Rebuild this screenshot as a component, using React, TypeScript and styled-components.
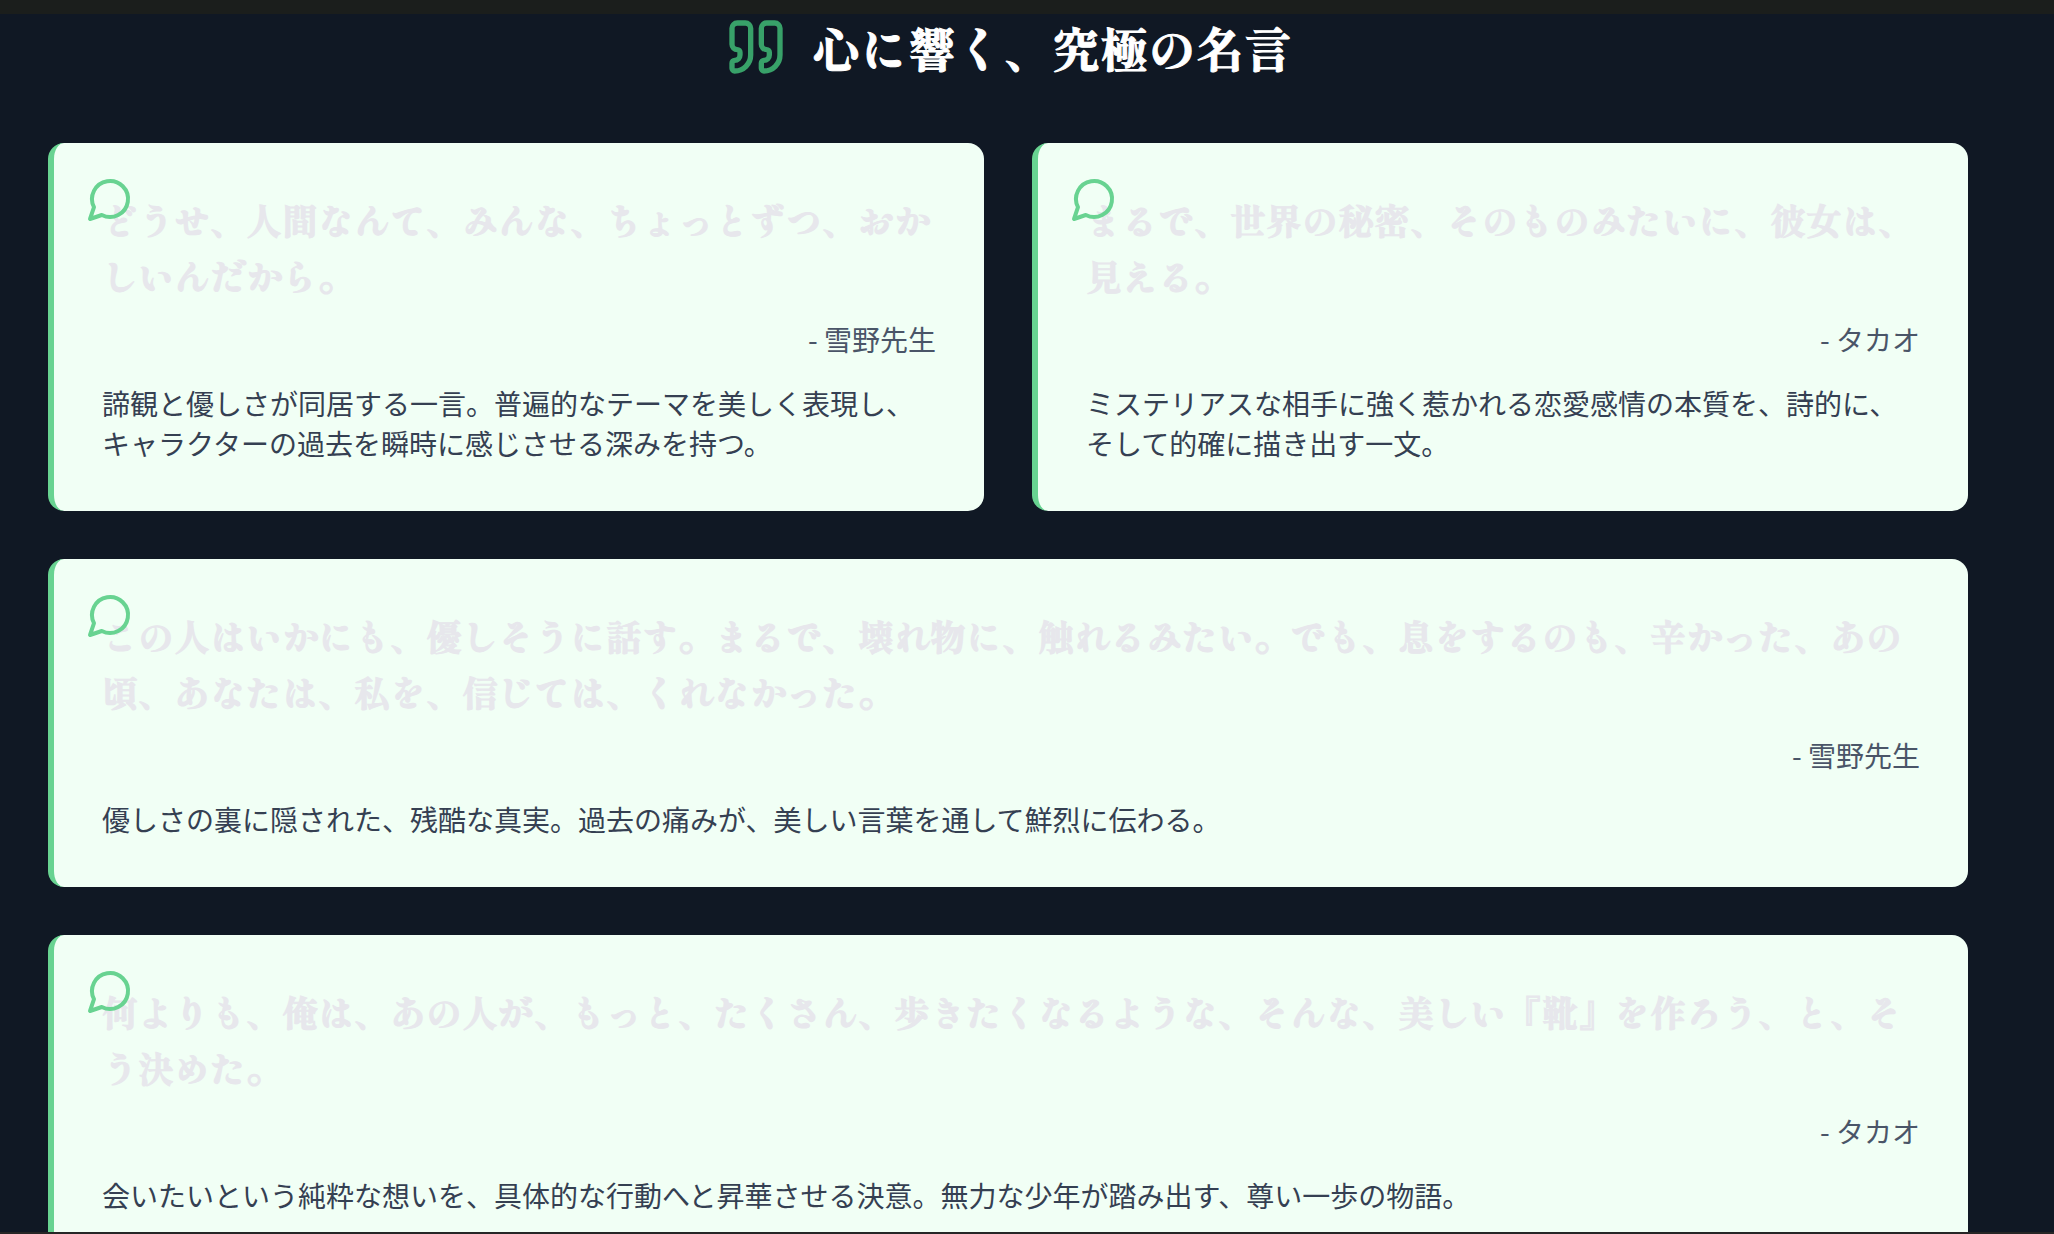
import React from "react";
import styled, { createGlobalStyle } from "styled-components";

const sans = `"Noto Sans CJK JP", sans-serif`;
const mincho = `"Shippori Mincho", "Noto Serif CJK JP", "Noto Sans CJK JP", serif`;

const GlobalStyle = createGlobalStyle`
  *, *::before, *::after { box-sizing: border-box; }
  body { margin: 0; background: #101824; font-family: ${sans}; }
  h2, p, blockquote, figure { margin: 0; }
`;

const Shell = styled.div`
  display: flex;
  flex-direction: column;
  height: 100vh;
  overflow: hidden;
`;

const TopEdge = styled.div`
  flex: none;
  height: 14px;
  background: #1b1e1c;
`;

const BottomEdge = styled.div`
  position: relative;
  z-index: 1;
  flex: none;
  height: 2px;
  background: #262626;
`;

const Viewport = styled.main`
  flex: 1;
  min-height: 0;
  padding: 1px 86px 0 48px;
`;

const Heading = styled.h2`
  display: flex;
  align-items: center;
  justify-content: center;
  gap: 24px;
  margin-bottom: 64px;
  font-family: ${mincho};
  font-size: 48px;
  font-weight: 900;
  line-height: 62px;
  color: #ffffff;
  -webkit-text-stroke: 1px currentColor;
`;

const HeadingIcon = styled.svg`
  flex: none;
  width: 64px;
  height: 64px;
  color: #38a169;
`;

const HeadingText = styled.span`
  white-space: nowrap;
`;

const QuoteGrid = styled.div`
  display: grid;
  grid-template-columns: repeat(2, minmax(0, 1fr));
  gap: 48px;
`;

const Card = styled.figure<{ $wide?: boolean }>`
  position: relative;
  grid-column: ${({ $wide }) => ($wide ? "1 / -1" : "auto")};
  padding: 48px;
  border-left: 6px solid #68d391;
  border-radius: 16px;
  background: #f1fff5;
`;

const BubbleIcon = styled.svg`
  position: absolute;
  top: 32px;
  left: 32px;
  width: 48px;
  height: 48px;
  color: #68d391;
`;

const Quote = styled.blockquote`
  font-family: ${mincho};
  font-size: 36px;
  font-weight: 900;
  line-height: 56px;
  color: #e7e7ec;
  -webkit-text-stroke: 1px currentColor;
`;

const Speaker = styled.figcaption`
  margin-top: 16px;
  font-size: 28px;
  line-height: 40px;
  text-align: right;
  color: #4a5568;
`;

const Comment = styled.p`
  margin-top: 24px;
  font-size: 28px;
  line-height: 40px;
  color: #354052;
`;

const strokeProps = {
  viewBox: "0 0 24 24",
  fill: "none",
  stroke: "currentColor",
  strokeWidth: 2,
  strokeLinecap: "round" as const,
  strokeLinejoin: "round" as const,
  "aria-hidden": true,
};

interface QuoteEntry {
  quote: string;
  speaker: string;
  comment: string;
  wide?: boolean;
}

const quotes: QuoteEntry[] = [
  {
    quote: "どうせ、人間なんて、みんな、ちょっとずつ、おかしいんだから。",
    speaker: "雪野先生",
    comment:
      "諦観と優しさが同居する一言。普遍的なテーマを美しく表現し、キャラクターの過去を瞬時に感じさせる深みを持つ。",
  },
  {
    quote: "まるで、世界の秘密、そのものみたいに、彼女は、見える。",
    speaker: "タカオ",
    comment:
      "ミステリアスな相手に強く惹かれる恋愛感情の本質を、詩的に、そして的確に描き出す一文。",
  },
  {
    quote:
      "この人はいかにも、優しそうに話す。まるで、壊れ物に、触れるみたい。でも、息をするのも、辛かった、あの頃、あなたは、私を、信じては、くれなかった。",
    speaker: "雪野先生",
    comment:
      "優しさの裏に隠された、残酷な真実。過去の痛みが、美しい言葉を通して鮮烈に伝わる。",
    wide: true,
  },
  {
    quote:
      "何よりも、俺は、あの人が、もっと、たくさん、歩きたくなるような、そんな、美しい『靴』を作ろう、と、そう決めた。",
    speaker: "タカオ",
    comment:
      "会いたいという純粋な想いを、具体的な行動へと昇華させる決意。無力な少年が踏み出す、尊い一歩の物語。",
    wide: true,
  },
];

function QuoteCard({ quote, speaker, comment, wide }: QuoteEntry) {
  return (
    <Card $wide={wide}>
      <Quote>{quote}</Quote>
      <Speaker>- {speaker}</Speaker>
      <Comment>{comment}</Comment>
      <BubbleIcon {...strokeProps}>
        <path d="M7.9 20A9 9 0 1 0 4 16.1L2 22Z" />
      </BubbleIcon>
    </Card>
  );
}

export default function App() {
  return (
    <Shell lang="ja">
      <GlobalStyle />
      <TopEdge />
      <Viewport>
        <Heading>
          <HeadingIcon {...strokeProps}>
            <path d="M16 3a2 2 0 0 0-2 2v6a2 2 0 0 0 2 2 1 1 0 0 1 1 1v1a2 2 0 0 1-2 2 1 1 0 0 0-1 1v2a1 1 0 0 0 1 1 6 6 0 0 0 6-6V5a2 2 0 0 0-2-2z" />
            <path d="M5 3a2 2 0 0 0-2 2v6a2 2 0 0 0 2 2 1 1 0 0 1 1 1v1a2 2 0 0 1-2 2 1 1 0 0 0-1 1v2a1 1 0 0 0 1 1 6 6 0 0 0 6-6V5a2 2 0 0 0-2-2z" />
          </HeadingIcon>
          <HeadingText>心に響く、究極の名言</HeadingText>
        </Heading>
        <QuoteGrid>
          {quotes.map((entry) => (
            <QuoteCard key={entry.quote} {...entry} />
          ))}
        </QuoteGrid>
      </Viewport>
      <BottomEdge />
    </Shell>
  );
}
